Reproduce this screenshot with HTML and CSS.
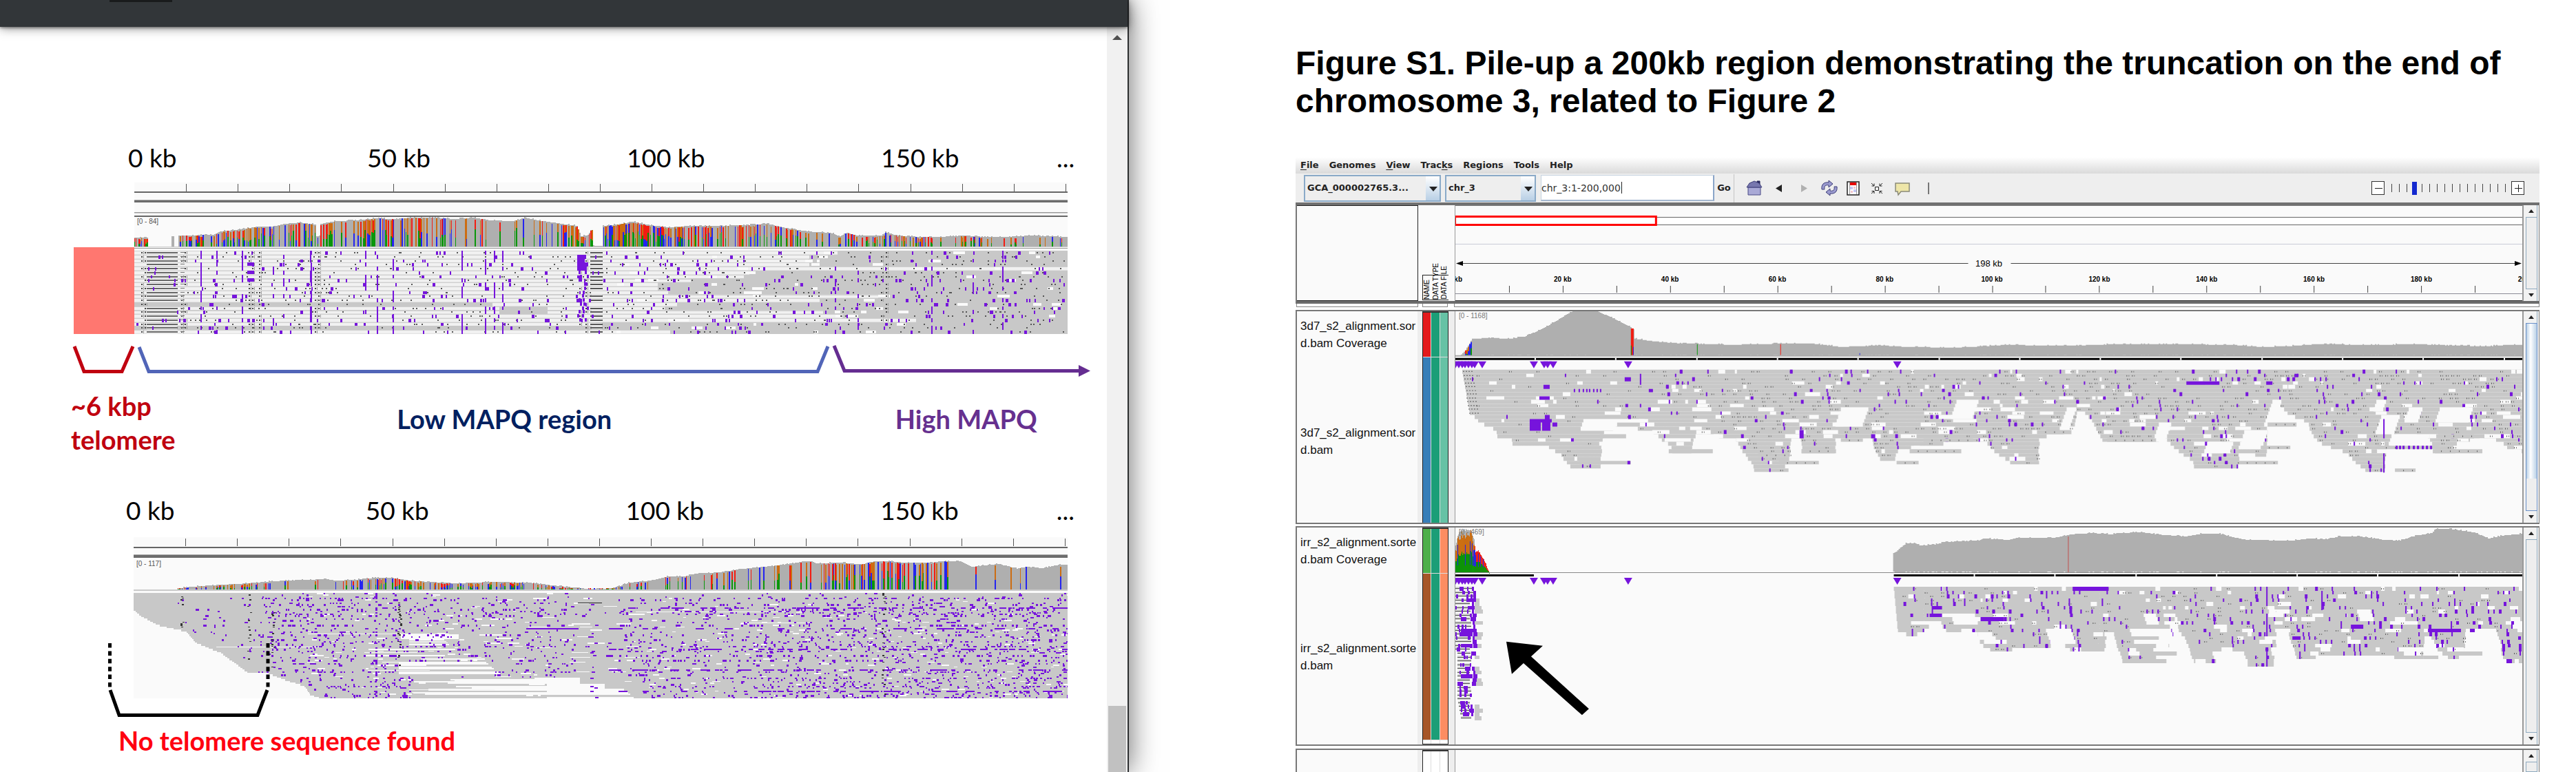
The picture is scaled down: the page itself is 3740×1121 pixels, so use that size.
FILE: index.html
```html
<!DOCTYPE html>
<html lang="en">
<head>
<meta charset="utf-8">
<title>Figure S1 – chromosome 3 pile-up</title>
<link rel="stylesheet" href="styles.css">
</head>
<body>
<section class="viewer">
  <header class="viewer-bar"><span class="viewer-field"></span></header>
  <div class="viewer-page">
    <div class="slide">
      <div class="axis"><span>0 kb</span><span>50 kb</span><span>100 kb</span><span>150 kb</span><span>...</span></div>
      <div class="figure figure-top">
        <div class="telomere-box"></div>
        <div class="plot"><svg data-plot="telomere" viewBox="0 0 1355 220" preserveAspectRatio="none"></svg><span class="range range-top">[0 - 84]</span></div>
      </div>
      <svg class="brackets" viewBox="0 485 1607 80" preserveAspectRatio="none" fill="none" stroke-width="5">
        <path stroke="#c00010" d="M108 503L122 539.500H177L193 503"/>
        <path stroke="#5165b8" d="M202 504L216 539.500H1187L1202 503"/>
        <path stroke="#652d91" d="M1211 502L1226 538.500H1568"/>
        <path fill="#652d91" d="M1566 530L1583 538.500L1566 547z"/>
      </svg>
      <div class="captions">
        <p class="cap-telomere">~6 kbp<br>telomere</p>
        <p class="cap-low">Low MAPQ region</p>
        <p class="cap-high">High MAPQ</p>
      </div>
      <div class="axis axis-second"><span>0 kb</span><span>50 kb</span><span>100 kb</span><span>150 kb</span><span>...</span></div>
      <div class="figure figure-bottom">
        <div class="plot"><svg data-plot="missing" viewBox="0 0 1356 234" preserveAspectRatio="none"></svg><span class="range range-bottom">[0 - 117]</span></div>
        <svg class="gap-bracket" viewBox="0 780 1607 271" preserveAspectRatio="none" fill="none" stroke="#000" stroke-width="5">
          <path stroke-dasharray="6.500 4.900" d="M159.500 934V1001M389 934V1001"/>
          <path d="M160 1002L173 1038.500H374L388 1002"/>
        </svg>
      </div>
      <p class="cap-missing">No telomere sequence found</p>
    </div>
    <div class="page-scroll"><span class="page-up"></span><span class="page-thumb"></span></div>
  </div>
</section>

<main class="paper">
  <h1>Figure S1. Pile-up a 200kb region demonstrating the truncation on the end of<br>chromosome 3, related to Figure 2</h1>
  <section class="igv">
    <nav class="menu">
      <a href="#"><u>F</u>ile</a><a href="#">Genomes</a><a href="#"><u>V</u>iew</a><a href="#">Trac<u>k</u>s</a><a href="#">Regions</a><a href="#">Tools</a><a href="#">Help</a>
    </nav>
    <div class="tools">
      <label class="combo combo-genome"><select aria-label="Genome"><option>GCA_000002765.3...</option></select></label>
      <label class="combo combo-chr"><select aria-label="Chromosome"><option>chr_3</option></select></label>
      <label class="locus-field"><input class="locus" type="text" aria-label="Locus" value="chr_3:1-200,000"></label>
      <button class="go">Go</button>
      <div class="icons">
        <button aria-label="Home"><svg width="24" height="24" viewBox="0 0 24 24"><path d="M16 4V2h4v5" fill="#26265c" stroke="#26265c"/><path d="M3 11H21V22H3z" fill="#a9a9d6" stroke="#4a4a86"/><path d="M1 11L5 5L12 2L19 5L23 11z" fill="#7777ae" stroke="#3e3e78"/></svg></button>
        <button aria-label="Back"><svg width="24" height="24" viewBox="0 0 24 24"><path d="M16 7V18L7 12.500z" fill="#222"/></svg></button>
        <button aria-label="Forward"><svg width="24" height="24" viewBox="0 0 24 24"><path d="M8 7V18L17 12.500z" fill="#b0b0b0"/></svg></button>
        <button aria-label="Refresh"><svg width="26" height="24" viewBox="0 0 26 24"><g fill="#9a9ace" stroke="#3e3e78"><path d="M2 14C1 7 5 3 12 4V1L18 6L12 11V8C8 7 5 9 6 14z"/><path d="M24 10C25 17 21 21 14 20V23L8 18L14 13V16C18 17 21 15 20 10z"/></g></svg></button>
        <button aria-label="Region of interest"><svg width="20" height="24" viewBox="3 0 20 24"><path d="M4 3H21V22H4z" fill="#fff" stroke="#222" stroke-width="1.500"/><path d="M7.500 4V21M17.500 4V21" stroke="#999"/><path d="M8 4H17V8H8z" fill="#e80000"/><path d="M8 10h4v4H8zM13 14h4v4h-4z" fill="#c5c8f4"/><path d="M13 10h3v3h-3zM9 16h3v3H9z" fill="#f4c5cd"/></svg></button>
        <button aria-label="Fit window"><svg width="24" height="24" viewBox="0 0 24 24" fill="none" stroke="#222"><path d="M9.500 10.500H14.500V15.500H9.500z"/><path d="M4 5L8 9M8 5.500V9H4.500M20 5L16 9M16 5.500V9H19.500M4 20L8 16.500M4.500 16.500H8V20M20 20L16 16.500M19.500 16.500H16V20"/></svg></button>
        <button aria-label="Popup text"><svg width="26" height="24" viewBox="0 0 26 24"><path d="M3 5H23V17H11L7 22L6 17H3z" fill="#eee6a8" stroke="#8a8a78" stroke-width="1.500"/></svg></button>
        <span class="caret-bar"></span>
      </div>
      <div class="zoomer">
        <button class="step" aria-label="Zoom out"><svg width="19" height="19" viewBox="0 0 19 19"><path d="M4 9.500H15" stroke="#222"/></svg></button>
        <input type="range" min="0" max="15" value="3" aria-label="Zoom level">
        <button class="step" aria-label="Zoom in"><svg width="19" height="19" viewBox="0 0 19 19"><path d="M4 9.500H15M9.500 4V15" stroke="#222"/></svg></button>
      </div>
    </div>

    <div class="panel header-panel">
      <div class="names boxed"></div>
      <div class="attrs attr-heads"><div class="heads"><span>NAME</span><span>DATA TYPE</span><span>DATA FILE</span></div></div>
      <div class="data ruler">
        <svg data-plot="ruler" viewBox="0 0 1550 139" preserveAspectRatio="none"></svg>
        <span class="span-label">198 kb</span>
        <div class="tick-labels" id="tick-labels"></div>
      </div>
      <div class="bar"><i class="up"></i><b class="track"></b><i class="down"></i></div>
    </div>
    <div class="strip"><span></span><span></span><span></span><span></span></div>

    <div class="panel track-one">
      <div class="names"><p>3d7_s2_alignment.sor<br>d.bam Coverage</p><p>3d7_s2_alignment.sor<br>d.bam</p></div>
      <div class="attrs"><div class="swatches">
        <span class="c-red"></span><span class="c-teal"></span><span class="c-mint"></span>
        <span class="c-blue"></span><span class="c-teal"></span><span class="c-mint"></span>
      </div></div>
      <div class="data"><svg data-plot="wild" viewBox="0 0 1550 308" preserveAspectRatio="none"></svg><span class="range range-igv">[0 - 1168]</span></div>
      <div class="bar"><i class="up"></i><b class="track half"></b><i class="down"></i></div>
    </div>

    <div class="panel track-two">
      <div class="names"><p>irr_s2_alignment.sorte<br>d.bam Coverage</p><p>irr_s2_alignment.sorte<br>d.bam</p></div>
      <div class="attrs"><div class="swatches">
        <span class="c-green"></span><span class="c-teal"></span><span class="c-coral"></span>
        <span class="c-brown"></span><span class="c-teal"></span><span class="c-coral"></span>
        <span></span><span></span><span></span>
      </div></div>
      <div class="data"><svg data-plot="irradiated" viewBox="0 0 1550 315" preserveAspectRatio="none"></svg><span class="range range-igv">[0 - 469]</span></div>
      <div class="bar"><i class="up"></i><b class="track"></b><i class="down"></i></div>
    </div>

    <div class="panel track-rest">
      <div class="names"></div>
      <div class="attrs"><div class="swatches"><span></span><span></span><span></span></div></div>
      <div class="data"></div>
      <div class="bar"><i class="up"></i><b class="track"></b></div>
    </div>
  </section>
</main>
<script src="plots.js"></script>
</body>
</html>
```
FILE: styles.css
```css
* { box-sizing: border-box; }
body { margin: 0; height: 100vh; overflow: hidden; display: grid; grid-template-columns: 1639fr 2101fr; background: #fff; font-family: "Liberation Sans", Arial, sans-serif; color: #000; }
p, h1 { margin: 0; }
button, input, select { font: inherit; color: inherit; margin: 0; padding: 0; border: 0; border-radius: 0; background: none; }
svg { display: block; }

/* left window */
.viewer { display: flex; flex-direction: column; height: 100vh; border-right: 2px solid #2c2e30; box-shadow: 0 0 40px rgba(0, 0, 0, .6); z-index: 1; background: #fff; min-width: 0; }
.viewer-bar { height: 39px; flex: none; background: #323639; box-shadow: 0 1px 16px rgba(0, 0, 0, .5), 0 1px 4px rgba(0, 0, 0, .5); padding-left: 159px; position: relative; }
.viewer-field { display: block; width: 91px; height: 3px; background: #191b1c; }
.viewer-page { flex: 1; min-height: 0; display: flex; }
.slide { flex: 1; min-width: 0; padding-top: 168px; font-family: Lato, "Open Sans", sans-serif; font-size: 38px; overflow: hidden; }
.axis { display: grid; grid-template-columns: 347fr 377fr 369fr 255fr 73fr; padding-left: 186px; line-height: 44px; font-size: 37px; }
.axis-second { margin-top: 56px; padding-left: 183px; }
.figure { display: flex; padding-right: 57px; position: relative; }
.figure-top { margin-top: 14px; padding-left: 107px; }
.figure-bottom { margin-top: 17px; padding: 0 57px 37px 194px; }
.telomere-box { width: 88px; height: 126px; align-self: flex-end; background: #ff7770; }
.plot { flex: 1; min-width: 0; position: relative; }
.plot svg { width: 100%; height: 220px; }
.figure-bottom .plot svg { height: 234px; }
.range { position: absolute; left: 4px; font: 10px/12px "Liberation Sans", Arial, sans-serif; color: #555; }
.range-top { top: 51px; }
.range-bottom { top: 33px; }
.range-igv { top: 1px; left: 5px; color: #777; }
.brackets { width: 100%; height: 80px; }
.gap-bracket { position: absolute; inset: 0; width: 100%; height: 100%; }
.captions { display: grid; grid-template-columns: 473fr 723fr 307fr; padding-left: 103px; line-height: 49px; font-weight: 700; }
.cap-telomere { color: #c0000f; }
.cap-low { color: #002060; padding-top: 19px; }
.cap-high { color: #66308f; padding-top: 19px; }
.cap-missing { color: #ff0010; font-weight: 700; line-height: 49px; padding-left: 172px; }
.page-scroll { width: 30px; background: #f1f1f1; display: flex; flex-direction: column; align-items: center; justify-content: space-between; }
.page-up { margin-top: 12px; border: 7px solid transparent; border-top: 0; border-bottom: 7px solid #505050; }
.page-thumb { width: 26px; height: 96px; background: #c1c1c1; }

/* right document */
.paper { display: flex; flex-direction: column; height: 100vh; padding: 64px 53px 0 242px; min-width: 0; }
h1 { font-size: 48px; line-height: 55px; font-weight: 700; white-space: nowrap; }
.igv { margin-top: 54px; flex: 1; min-height: 0; display: flex; flex-direction: column; background: #fff; }
.menu { height: 24px; flex: none; display: flex; gap: 15px; padding-left: 7px; background: linear-gradient(#fff, #dadada); font: 700 13px/24px "DejaVu Sans", sans-serif; }
.menu a { color: #222; text-decoration: none; }
.menu a u { text-underline-offset: 2px; }
.tools { height: 46px; flex: none; display: flex; align-items: center; background: #eee; border-bottom: 4px solid #707070; padding-left: 12px; font: 700 13px/20px "DejaVu Sans", sans-serif; color: #222; }
.combo { position: relative; height: 39px; }
.combo select { appearance: none; width: 100%; height: 39px; padding-left: 3px; border: 2px solid #8aaac8; background: linear-gradient(#fff, #b8cfe5) right / 20px 100% no-repeat #eee; }
.combo::after { content: ""; position: absolute; right: 5px; top: 17px; border: 6px solid transparent; border-top: 7px solid #222; border-bottom: 0; }
.combo-genome { width: 199px; margin-right: 6px; }
.combo-chr { width: 132px; margin-right: 7px; }
.locus-field { position: relative; width: 252px; height: 38px; }
.locus-field::after { content: ""; position: absolute; left: 117px; top: 10px; width: 1px; height: 17px; background: #222; }
.locus { display: block; width: 100%; height: 38px; background: #fff; border: 1px solid #c5d3e0; border-right: 2px solid #8aa5c8; border-bottom: 2px solid #a5b8d0; font-size: 14px; font-weight: 400; color: #333; }
.go { width: 29px; height: 41px; border-right: 1px solid #c4c4c4; text-align: center; }
.icons { display: flex; align-items: center; margin-left: 17px; gap: 12px; }
.icons button { height: 24px; }
.caret-bar { width: 2px; height: 17px; margin-left: 12px; background: #777; }
.zoomer { display: flex; align-items: center; margin: 0 22px 0 auto; gap: 8px; }
.step { width: 19px; height: 20px; border: 1px solid #333; background: #fff; display: grid; place-items: center; overflow: hidden; }
input[type=range] { appearance: none; width: 168px; height: 19px; background: repeating-linear-gradient(90deg, #444 0 1px, transparent 1px 11px) 2px center / 100% 12px no-repeat; }
input[type=range]::-webkit-slider-thumb { appearance: none; width: 7px; height: 19px; background: #1329cf; }

.panel { display: grid; grid-template-columns: 176px 53px minmax(0, 1fr) 24px; border: 2px solid #777; border-width: 2px 1px 2px 2px; background: #fafafa; flex: none; }
.header-panel { height: 143px; border-color: #777; border-top: 0; border-bottom: 4px solid #6c6c6c; }
.names { overflow: hidden; background: #fafafa; font-size: 17px; line-height: 25px; white-space: nowrap; padding-left: 5px; color: #111; border-right: 1px solid #eee; }
.boxed { border: 1px solid #222; border-left: 0; }
.attrs { background: #eee; padding: 0 9px 0 6px; }
.attr-heads { background: #fafafa; display: flex; align-items: flex-end; }
.heads { display: flex; justify-content: space-between; width: 38px; height: 37px; border: 1px solid #222; border-right: 0; align-items: flex-end; font-size: 10px; line-height: 12px; margin-bottom: 1px; }
.heads span { writing-mode: vertical-rl; rotate: 180deg; width: 12px; white-space: nowrap; }
.data { border-left: 1px solid #999; position: relative; overflow: hidden; background: #fafafa; }
.data svg { width: 100%; height: 100%; }
.span-label { position: absolute; left: 0; right: 0; top: 77px; text-align: center; font-size: 13px; line-height: 16px; }
.tick-labels { position: absolute; left: 0; right: 0; top: 102px; height: 12px; font: 700 10px/12px "Liberation Sans", Arial, sans-serif; }
.tick-labels span { position: absolute; width: 60px; margin-left: -30px; text-align: center; }
.bar { border-left: 2px solid #999; padding: 0 2px 0 3px; display: flex; flex-direction: column; background: #f2f2f2; }
.bar i { height: 17px; display: grid; place-items: center; border-right: 1px solid #8faabf; flex: none; }
.bar i::after { content: ""; border: 4px solid transparent; }
.bar .up::after { border-top: 0; border-bottom: 5px solid #222; }
.bar .down::after { border-bottom: 0; border-top: 5px solid #222; }
.track { flex: 1; border: 1px solid #8faabf; background: #eee; }
.track.half { background: linear-gradient(90deg, #b8cfe5, #fff 40%, #b8cfe5) top / 100% 83% no-repeat #eee; border-color: #6a90c8; }
.strip { display: grid; grid-template-columns: 177px 6px 37px 9px minmax(0, 1fr); height: 9px; flex: none; margin-bottom: 0; padding: 0 0 4px 1px; }
.strip span { border: 1px solid #888; border-top: 0; background: #fafafa; }
.strip span:nth-child(2) { grid-column: 3; }
.strip span:nth-child(3) { display: none; }
.strip span:nth-child(4) { grid-column: 5; }
.track-one { height: 311px; }
.track-two { height: 319px; margin-top: 3px; }
.track-one .names p { padding-top: 18px; }
.track-one .names p:first-child { height: 146px; padding-top: 9px; }
.track-two .names p { padding-top: 8px; }
.track-two .names p:first-child { height: 155px; padding-top: 9px; }
.track-rest { margin-top: 4px; flex: 1; min-height: 0; border-bottom: 0; }
.swatches { display: grid; grid-template-columns: 1fr 1fr 1fr; gap: 1px; height: 100%; background: #ddd; border: 1px solid #222; border-top: 2px solid #333; border-bottom: 0; }
.track-one .swatches { grid-template-rows: 64px 1fr; }
.track-two .swatches { grid-template-rows: 64px 1fr 5px; border-bottom: 1px solid #222; }
.swatches span { background: #fff; }
.swatches .c-red { background: #e41a1c; }
.swatches .c-teal { background: #1b9e77; }
.swatches .c-mint { background: #66c2a5; }
.swatches .c-blue { background: #377eb8; }
.swatches .c-green { background: #4daf4a; }
.swatches .c-coral { background: #fc8d62; }
.swatches .c-brown { background: #a65628; }
```
FILE: plots.js
```javascript
// Draws the coverage tracks and read pile-ups.
let seed = 7;
const rnd = () => { seed = (seed * 1664525 + 1013904223) % 4294967296; return seed / 4294967296; };
const between = (a, b) => a + rnd() * (b - a);
const pick = list => list[Math.floor(rnd() * list.length)];
const READ = '#c8c8c8', COVER = '#afafaf', INS = '#7614dc', PAGE = '#fafafa';
const RED = '#f21c12', ORANGE = '#cc6d12', BLUE = '#2424f0', GREEN = '#0a960a';

function plot(name) {
  const svg = document.querySelector(`[data-plot="${name}"]`);
  let html = '', color = '', d = '';
  const flush = () => { if (d) html += `<path fill="${color}" d="${d}"/>`; d = ''; };
  return {
    rect(c, x, y, w, h) {
      if (c !== color) { flush(); color = c; }
      x = Math.round(x); const y1 = Math.round(y + h); y = Math.round(y);
      d += `M${x} ${y}h${Math.max(1, Math.round(w))}V${Math.max(y + 1, y1)}H${x}z`;
    },
    shape(c, path) { flush(); html += `<path fill="${c}" d="${path}"/>`; },
    done() { flush(); svg.innerHTML = html; }
  };
}
function level(points, x) {
  for (let i = 1; i < points.length; i++) {
    const [x0, h0] = points[i - 1], [x1, h1] = points[i];
    if (x >= x0 && x <= x1) return x1 === x0 ? h1 : h0 + (h1 - h0) * (x - x0) / (x1 - x0);
  }
  return 0;
}
function coverage(p, points, base, width) {
  for (let x = 0; x < width; x += 2) {
    const h = level(points, x + 1);
    if (h > .5) p.rect(COVER, x, base - h - (rnd() < .2 ? 1 : 0), 2, h + 1);
  }
}
// Each zone: [from, to, share of coloured columns]
function variants(p, points, base, zones) {
  for (const [from, to, share] of zones) for (let x = from; x < to; x += 2) {
    if (rnd() > share) continue;
    const h = Math.max(2, level(points, x + 1) - between(0, 3)), cut = h * between(.25, .7);
    const top = pick([RED, ORANGE, RED, ORANGE, BLUE]), w = rnd() < .4 ? 1 : 2;
    p.rect(top, x, base - h, w, h);
    p.rect(pick([GREEN, BLUE, GREEN, top]), x, base - cut, w, cut);
  }
}
function slideRuler(p, width, lines) {
  p.rect(PAGE, 0, 0, width, lines.height);
  for (let i = 1; i <= 18; i++) p.rect('#555', i * 75.1, 2, 1, 11);
  for (const [y, h, c] of lines.rules) p.rect(c, 0, y, width, h);
}

function telomere() {
  const p = plot('telomere'), W = 1355;
  slideRuler(p, W, { height: 220, rules: [[13, 2, '#666'], [25, 1, '#aaa'], [26, 3, '#6c6c6c'], [43, 1, '#999'], [44, 1, '#ccc'], [48, 2, '#666']] });
  const cov = [[0,13],[20,13],[21,0],[54,0],[55,15],[57,15],[58,0],[63,0],[64,16],[73,16],[115,17],[126,22],[155,25],[178,29],[201,29],[218,33],[241,35],[264,32],[265,15],[270,15],[271,33],[293,37],[322,38],[350,41],[379,40],[402,42],[436,42],[465,40],[494,42],[517,38],[551,37],[568,42],[586,38],[620,33],[643,30],[649,15],[660,17],[662,24],[665,24],[666,1],[680,1],[681,30],[701,32],[725,36],[750,31],[776,28],[804,30],[844,30],[885,31],[919,33],[942,28],[976,22],[1011,20],[1025,15],[1034,20],[1051,16],[1085,16],[1091,21],[1108,16],[1143,14],[1172,14],[1206,16],[1235,14],[1263,14],[1304,16],[1355,14]];
  coverage(p, cov, 93, W);
  variants(p, cov, 93, [[0,20,.95],[64,72,.8],[73,115,.6],[115,172,.8],[172,264,.5],[264,272,.6],[272,320,.5],[320,350,.75],[350,480,.55],[480,620,.28],[620,665,.75],[681,776,.88],[776,970,.5],[970,1060,.3],[1060,1130,.55],[1130,1180,.6],[1180,1250,.3],[1250,1355,.25]]);
  p.rect('#ccc', 0, 93, W, 1); p.rect('#999', 0, 95, W, 1);
  const solid = [1021,980,978,980,1400,893,885,808,760,760,775,1080,995,788,770,1000,1027,1135,670,0,778];
  const insCols = [[97,.7],[120,.3],[157,.8],[202,.5],[217,.5],[256,.85],[257,.8],[336,.4],[353,.7],[376,.7],[476,.7],[510,.6],[523,.5],[535,.6],[1018,.4],[1051,.3],[1158,.5],[1218,.4],[1261,.6]];
  for (let r = 0; r < 21; r++) {
    const y = 99 + r * 5.76;
    p.rect('#f1f1f1', 0, y, W, 5.76);
    p.rect('#cfcfcf', 0, y, W, 1.2); p.rect('#e2e2e2', 0, y + 5, W, 1);
    p.rect(READ, solid[r], y, W - solid[r], 5.76);
    if (r === 13) p.rect(READ, 0, y, 520, 5.76);
    if (r === 14 || r === 15) p.rect(READ, 530, y, 70, 5.76);
    for (let i = 0; i < 3; i++) p.rect(PAGE, between(700, 1355), y + 1, between(4, 18), 4);
    for (let i = 0; i < 34; i++) p.rect('#555', between(70, 1350), y + 2, 1.5, 2);
    for (const c of [10, 15, 68, 73, 166, 171, 181, 262, 267, 646, 655, 1084, 1091]) if (rnd() < .65) { p.rect('#444', c, y + 2, 2, 2); p.rect('#999', c + 3, y + 1, 1, 4); }
    if (r !== 13) {
      p.rect(PAGE, 18, y + 1, 44, 4); p.rect('#666', 18, y + 2, 45, 2); p.rect('#777', 67, y + 2, 6, 1);
      if (r !== 10) { p.rect(PAGE, 664, y + 1, 15, 4); p.rect('#555', 662, y + 2, 18, 2); }
    }
    for (const [c, chance] of insCols) if (rnd() < chance && (r !== 13)) p.rect(INS, c - 1, y, 2, 5.76);
    for (let i = 0; i < (r === 12 || r === 7 || r === 17 ? 36 : 21); i++) p.rect(INS, between(0, 1350), y + 1, pick([2, 2, 2, 3, 4]), 5);
    if ([3,5,7].includes(r)) p.rect(INS, 164, y, 10, 5);
    if (r > 0 && r < 5) p.rect(INS, 643, y, between(10, 17), 6);
    if (r > 4 && r < 18) for (let i = 0; i < 2; i++) p.rect(INS, between(643, 657), y, 3, 5);
  }
  p.done();
}

function missing() {
  const p = plot('missing'), W = 1356;
  slideRuler(p, W, { height: 234, rules: [[14, 2, '#666'], [25, 1, '#aaa'], [26, 4, '#6c6c6c']] });
  const cov = [[64,1],[75,3],[110,6],[167,9],[201,12],[247,14],[281,15],[293,13],[322,14],[350,17],[374,17],[402,13],[430,11],[471,9],[517,11],[574,10],[609,6],[649,2],[655,1],[680,1],[700,3],[720,10],[752,13],[775,19],[800,19],[815,23],[850,25],[885,30],[925,34],[950,37],[975,41],[985,41],[990,38],[1030,39],[1045,37],[1060,37],[1075,41],[1100,41],[1120,39],[1160,39],[1170,41],[1200,41],[1217,33],[1255,37],[1285,30],[1296,33],[1320,31],[1345,36],[1356,36]];
  coverage(p, cov, 76, W);
  variants(p, cov, 76, [[64,167,.45],[167,225,.35],[255,300,.3],[300,345,.4],[345,400,.55],[400,560,.6],[560,650,.5],[660,720,.45],[720,900,.32],[900,1020,.28],[1020,1060,.6],[1060,1165,.5],[1165,1182,.5],[1222,1224,1],[1250,1252,1],[1273,1275,1],[1287,1289,1],[1295,1297,1],[1345,1347,1]]);
  p.rect('#cacaca', 0, 76, W, 2);
  const left = [[0,0],[23,0],[32,10],[46,36],[55,76],[71,90],[86,127],[114,165],[116,196],[125,219],[134,248],[147,257],[154,280]];
  for (let r = 0; r < 66; r++) {
    const y = r * 2.32, Y = 81 + y, start = level(left, y), dark = y > 122;
    p.rect(READ, start, Y, W - start, 2.4);
    if (y > 58 && y < 66) p.rect(PAGE, 388, Y, between(60, 85), 2.4);
    if (y > 66 && y < 76) p.rect(PAGE, 400, Y, 50 + y - 66, 1.5);
    if (y > 78 && y < 112 && r % 2) p.rect(PAGE, between(320, 430), Y, between(70, 130), 1.5);
    if (y > 98 && y < 119 && r % 3) p.rect(PAGE, 385, Y, 125 + (y - 98) * 1.2, 2.4);
    if (dark) {
      const from = r % 4 === 1 ? 600 : between(390, 500), to = y < 132 ? 648 : y < 138 ? 684 : level([[138, 710], [154, 730]], y);
      if (r !== 64) p.rect(PAGE, from, Y, to - from, 2.4);
    }
    const gaps = y > 30 ? 6 : 3;
    for (let i = 0; i < gaps; i++) { const gx = between(Math.max(start + 60, 250), W); p.rect(PAGE, gx, Y, between(4, gx > 500 && gx < 720 ? 30 : 12), 1.6); }
    if ([11, 18, 25, 33, 48, 60].includes(r)) p.rect('#f4f4f4', between(100, 900), Y + 1, between(80, 240), 1);
    if (r === 6) p.rect('#222', 645, Y, 35, 1);
    const busy = pick([.4, .9, 1.3, 1.9]);
    for (let x = Math.max(start + 10, 64); x < W; x += 5) {
      const share = x < 180 ? .05 : x < 400 ? .17 : x < 640 ? .12 : x < 700 ? .04 : x < 900 ? .12 : .18;
      const hollow = (dark && x > 400 && x < 730) || (y > 98 && y < 119 && x > 385 && x < 520);
      if (!hollow && rnd() < share * busy) p.rect(INS, x + between(0, 3), Y, pick([2, 2, 3, 3, 5]), 2.4);
    }
    if (r % 13 === 9) for (let x = 690; x < W; x += 7) if (rnd() < .3) p.rect(INS, x, Y, between(4, 14), 2);
    if (r === 22) p.rect(INS, 570, Y, 76, 1.5);
    for (const c of [70, 167, 201, 385, 1088]) if (c > start + 5 && rnd() < .3 && !(dark && c === 385)) p.rect('#333', c + between(-2, 2), Y, 3, 1.5);
    if (rnd() < .5 && start < 350) p.rect(INS, 351, Y, 3, 2.4);
    if (rnd() < .3) p.rect(INS, between(662, 670), Y, 5, 2);
  }
  p.done();
}

function ruler() {
  const p = plot('ruler'), W = 1550;
  p.rect(PAGE, 0, 0, W, 139);
  p.rect('#777', 0, 0, W, 1);
  p.rect('#666', 0, 17, W, 12); p.rect('#fff', 0, 18, W, 10);
  p.rect('#f00', 0, 15, 293, 15); p.rect('#fff', 1, 18, 289, 9);
  p.rect('#c9ccd6', 0, 56, W, 1);
  p.rect('#444', 8, 84, 737, 1); p.rect('#444', 807, 84, 737, 1);
  p.shape('#000', 'M1 84.5L11 81V88zM1549 84.5L1539 81V88z');
  for (let i = 1; i < 20; i++) p.rect('#444', i * 77.95, 117, 1, 10);
  p.rect('#8a8a96', 0, 128, W, 1); p.rect('#333', 0, 138, W, 1);
  p.done();
  document.getElementById('tick-labels').innerHTML = [...Array(11).keys()]
    .map(i => `<span style="left:${i * 10.06}%">${i * 20} kb</span>`).join('');
}

function pile(p, top, rows, depth, from, to, gapRate, insRate, hot) {
  for (let r = 0; r < rows; r++) {
    const y = top + r * 5.53;
    for (let x = from(r); x < to; x += 2) if (level(depth, x) >= r + .6) p.rect(READ, x, y, 2, 5.6);
    for (let x = from(r) + 20; x < to; x += 8) if (level(depth, x) > r && rnd() < gapRate) p.rect(PAGE, x, y, between(3, r > 5 ? 26 : 12), 5.6);
    for (let x = from(r) + 12; x < to - 4; x += 8) if (level(depth, x) > r + .6) {
      const [a, b] = hot(x);
      if (rnd() < a * .12) { p.rect('#555', x, y + 2, 1, 2); p.rect('#777', x + 3, y + 2, 1, 2); }
      if (rnd() < b * insRate) p.rect(INS, x, y, pick([2, 2, 2, 4]), 5.6);
    }
  }
}
function markers(p, y, list) {
  for (const x of list) p.shape(INS, `M${x - 6} ${y}H${x + 6}L${x} ${y + 10}z`);
}
function blackBar(p, y, from, to, first) {
  p.rect('#000', from, y, to - from, 3);
  for (let x = first; x < to; x += 117.3) p.rect('#fff', x, y, 2, 3);
}
const cluster = [0, 5, 10, 14, 19, 24, 28, 39, 114, 129, 134, 142, 251];

function wild() {
  const p = plot('wild'), W = 1550;
  const cov = [[8,0],[14,6],[22,18],[24,24],[50,25],[80,24],[100,27],[130,40],[150,52],[170,64],[206,64],[230,54],[256,40],[259,37],[260,24],[275,22],[290,20],[325,17],[380,16],[400,15],[430,16],[490,17],[515,17],[545,14],[560,12],[615,14],[660,12],[720,11],[750,12],[800,15],[850,14],[900,14],[960,16],[1050,16],[1130,15],[1170,12],[1210,13],[1250,16],[1330,15],[1400,16],[1450,14],[1500,13],[1530,15],[1550,15]];
  coverage(p, cov, 64, W);
  variants(p, cov, 64, [[14, 24, 1]]);
  p.rect(RED, 255, 25, 4, 39); p.rect(GREEN, 255, 50, 1, 14); p.rect(BLUE, 258, 52, 1, 12);
  p.rect(GREEN, 351, 48, 1, 16); p.rect(RED, 472, 48, 1, 16); p.rect(BLUE, 587, 61, 1, 3);
  p.rect('#aaa', 0, 64, W, 2);
  blackBar(p, 68, 0, W, 115);
  markers(p, 73, cluster.concat(642));
  const depth = [[8,12],[23,12],[34,14],[58,16],[60,18],[80,18],[82,20],[134,20],[136,21],[150,22],[158,24],[168,26],[210,26],[212,19],[216,16],[245,15],[278,16],[292,17],[300,19],[313,20],[315,22],[342,22],[344,19],[350,17],[405,18],[418,22],[431,25],[433,27],[482,27],[484,23],[488,18],[501,18],[503,22],[550,22],[552,18],[604,18],[610,22],[617,24],[638,24],[642,21],[735,19],[770,19],[783,22],[803,24],[806,25],[846,25],[848,18],[898,16],[902,11],[912,11],[925,14],[941,19],[1015,19],[1030,18],[1044,21],[1070,24],[1072,26],[1136,26],[1138,22],[1177,23],[1179,15],[1187,8],[1196,9],[1210,12],[1237,14],[1246,18],[1260,20],[1295,22],[1310,25],[1325,27],[1349,27],[1351,22],[1369,17],[1414,18],[1422,22],[1452,22],[1455,19],[1500,18],[1519,19],[1530,21],[1548,21],[1550,24]];
  pile(p, 85, 27, depth, r => 10 + r, W, .06, .1, x => x < 250 ? [.5, .12] : x < 400 ? [.8, .4] : [1.8, .9]);
  const white = [[186,237,13,3],[235,280,13,1],[190,220,15,1],[560,600,10,5],[728,760,8,5],[888,902,10,6],[1022,1040,14,5],[1092,1130,19,3],[1146,1180,16,5],[1187,1200,8,7],[1338,1352,8,3],[1345,1372,12,5],[1385,1405,10,4],[1430,1478,10,4],[1360,1415,17,3]];
  for (const [a, b, row, n] of white) for (let i = 0; i < n; i++) p.rect(PAGE, a - i * 2, 85 + (row + i) * 5.53, b - a, 5.6);
  for (const [a, b, row] of [[210,248,17],[180,255,24],[310,374,21],[440,485,22],[470,528,24],[503,553,21],[560,592,18],[660,735,21],[641,673,24],[680,760,18],[845,895,16],[947,1018,18],[1125,1195,24],[1170,1213,20],[1180,1222,14],[1365,1395,26],[1340,1430,20],[1420,1492,21],[1425,1480,17]]) {
    p.rect(READ, a, 85 + row * 5.53, b - a, 5.6);
    for (let x = a + 12; x < b; x += 13) if (a > 400) p.rect('#555', x, 87 + row * 5.53, 1, 2);
  }
  for (let r = 0; r < 12; r++) for (let i = 0; i < 4; i++) p.rect('#555', 11 + r + i * 4 - (r > 6 ? 2 : 0), 87 + r * 5.53, 2, 1);
  for (const [x, row, w, n] of [[128,4,9,1],[122,7,15,1],[130,12,7,1],[108,13,32,1],[108,14,16,2],[126,14,12,2],[141,14,7,1],[246,2,9,1],[251,12,4,1],[281,5,6,1],[250,24,4,1],[1062,3,48,1],[1178,3,9,1],[268,1,2,3],[268,9,2,1],[500,16,6,2],[1348,13,2,5],[1348,22,2,5],[604,17,6,1],[1219,1,5,1]]) p.rect(INS, x, 85 + row * 5.53, w, n * 5.6);
  for (const x of [172,179,185,190,194,200,205,210]) p.rect(INS, x, 113, 2, 5);
  for (const x of [1366,1371,1376,1384,1391,1397,1404,1410,1416]) p.rect(INS, x, 196, 3, 5);
  for (const x of [184,195]) p.rect(INS, x, 223, 2, 5);
  p.done();
}

function irradiated() {
  const p = plot('irradiated'), W = 1550;
  const cov = [[637,26],[645,33],[655,41],[668,41],[675,38],[695,39],[712,43],[761,45],[768,48],[805,46],[815,49],[870,49],[895,54],[925,56],[955,54],[962,56],[998,57],[1020,54],[1060,51],[1085,55],[1110,55],[1135,49],[1150,46],[1215,45],[1240,48],[1265,47],[1285,51],[1315,51],[1350,46],[1372,45],[1395,52],[1420,56],[1425,62],[1445,62],[1480,57],[1502,48],[1520,52],[1550,55]];
  coverage(p, cov, 64, W);
  p.rect('#c0504d', 890, 13, 1, 52);
  for (let x = 0; x < 50; x++) {
    const h = level([[0,40],[3,56],[8,63],[22,63],[27,50],[29,30],[33,32],[40,22],[49,1]], x) - rnd() * 3;
    p.rect(COVER, x, 65 - h, 1, h);
    const o = x < 28 ? Math.max(8, h - between(1, 12)) : h;
    p.rect(x < 28 ? ORANGE : RED, x, 65 - o, 1, o);
    p.rect(GREEN, x, 65 - o * .5, 1, o * .5);
    if (rnd() < .17) p.rect(BLUE, x, 60 - o * .7, 1, o * .6);
  }
  p.rect('#888', 0, 65, W, 1);
  blackBar(p, 68, 0, 114, 200);
  blackBar(p, 68, 637, W, 753);
  markers(p, 73, cluster.concat(642));
  const depth = [[637,12],[665,13],[678,12],[690,10],[703,9],[712,12],[758,12],[761,15],[770,16],[779,17],[807,17],[809,16],[890,16],[894,17],[942,17],[944,14],[950,12],[957,14],[969,20],[1032,20],[1034,18],[1042,10],[1060,14],[1072,20],[1102,20],[1104,19],[1149,19],[1151,21],[1187,21],[1189,18],[1194,11],[1206,11],[1220,18],[1222,19],[1249,19],[1251,18],[1361,18],[1363,19],[1405,19],[1407,13],[1415,13],[1428,17],[1444,19],[1464,19],[1466,12],[1500,11],[1511,12],[1519,18],[1527,20],[1550,20]];
  pile(p, 86, 21, depth, r => 637 + r / 2, W, .07, .18, x => [1, x > 690 && x < 930 ? 1.2 : x > 1060 ? 1.1 : .6]);
  const white = [[980,1040,11,4],[1012,1036,15,4],[1000,1032,17,1],[1100,1146,17,2],[1000,1018,7,3],[720,755,7,3],[858,895,11,4],[1180,1190,5,3],[1310,1330,6,3],[1468,1512,11,5],[1370,1410,16,1]];
  for (const [a, b, row, n] of white) for (let i = 0; i < n; i++) p.rect(PAGE, a + i * 2, 86 + (row + i) * 5.53, b - a, 5.6);
  for (const [a, b, row] of [[970,1022,13],[970,1018,15],[994,1048,17],[985,1033,19],[1452,1492,17],[1406,1428,18]]) p.rect(READ, a, 86 + row * 5.53, b - a, 5.6);
  for (const [x, row, w, n] of [[897,0,52,1],[689,7,18,1],[763,8,34,1],[1413,11,48,1],[1474,11,7,1],[1178,0,2,5],[1178,7,2,6],[1178,19,2,2],[1258,1,2,5],[1301,10,18,1],[1216,13,12,1],[692,5,15,1],[1527,19,8,1]]) p.rect(INS, x, 86 + row * 5.53, w, n * 5.6);
  for (let r = 0; r < 35; r++) {
    const y = 86 + r * 5.53, from = r > 16 ? 3 + Math.max(0, r - 29) : 0;
    const end = [0,1,2].includes(r) ? 27 : pick([21, 22, 23]);
    p.rect('#d6d6d6', from, y, end - from, 4);
    p.rect('#555', from, y + 2, end - from, 1);
    if ([3,4,5,6,9,12,13,15,18,21,22,24,25,31,32,33,34].includes(r)) p.rect(READ, 28, y, pick([7, 10, 12]), 5.6);
    if (r < 16 || [21,22,23,24,25].includes(r)) p.rect(INS, 24 + Math.floor(rnd() * 3), y, pick([3, 4, 6]), 5.6);
    if (r % 5 < 4) for (let i = 0; i < 3; i++) p.rect(INS, between(from, 23), y, pick([2, 3, 3, 7]), 5.6);
    if ([11,12,23,15].includes(r)) p.rect(INS, 8, y, 17, 5.6);
  }
  p.shape('#000', 'M74 165.700L127 171.700L110 187.300L194 263.300L184 272.300L99 197L82 212.700z');
  p.done();
}

telomere();
missing();
ruler();
wild();
irradiated();
```
